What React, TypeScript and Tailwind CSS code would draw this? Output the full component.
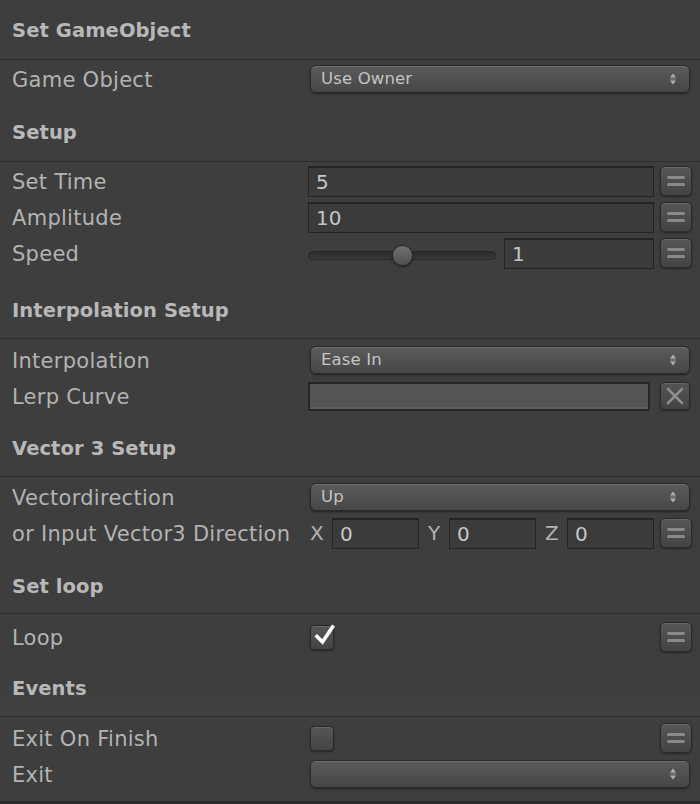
import React from "react";

const labelCls = "w-[308px] shrink-0 pl-[12px] pt-[1px] text-[21px] leading-[24px] tracking-[0.28px] text-[#b3b3b3] whitespace-nowrap";

function Header({ title, cls }: { title: string; cls: string }) {
  return (
    <div className={cls}>
      <div className="pl-[12px] text-[19.5px] font-bold leading-[24px] tracking-[0.1px] text-[#b8b8b8]">{title}</div>
    </div>
  );
}

function Sep() {
  return <div className="h-px bg-[#2e2e2e]" />;
}

function Row({ label, children }: { label: string; children?: React.ReactNode }) {
  return (
    <div className="flex h-[36px] items-center">
      <div className={labelCls}>{label}</div>
      <div className="flex flex-1 items-center pr-[8px]">{children}</div>
    </div>
  );
}

function Arrows() {
  return (
    <svg width="8" height="14" viewBox="0 0 8 14" className="shrink-0">
      <path d="M1 5.5 L4 1.5 L7 5.5 Z" fill="#b0b0b0" />
      <rect x="1" y="6.5" width="6" height="1" fill="#8a8a8a" />
      <path d="M1 8.5 L4 12.5 L7 8.5 Z" fill="#b0b0b0" />
    </svg>
  );
}

function Dropdown({ value }: { value: string }) {
  return (
    <div className="ml-[2px] flex h-[28px] w-[380px] items-center justify-between rounded-[6px] border border-[#2a2a2a] bg-gradient-to-b from-[#5b5b5b] to-[#474747] pl-[10px] pr-[12px] text-[16.5px] leading-[20px] tracking-[0.15px] text-[#c4c4c4] shadow-[inset_0_1px_0_rgba(255,255,255,0.12),0_1px_2px_rgba(0,0,0,0.45)]">
      <span>{value}</span>
      <Arrows />
    </div>
  );
}

function Field({ value, cls }: { value: string; cls: string }) {
  return (
    <div className={`flex h-[31px] items-center border border-t-2 border-[#242424] bg-[#3b3b3b] pl-[7px] text-[20px] leading-[24px] text-[#c6c6c6] ${cls}`}>
      {value}
    </div>
  );
}

function EqButton() {
  return (
    <div className="ml-[6px] flex h-[30px] w-[32px] shrink-0 flex-col items-center justify-center gap-[4px] rounded-[5px] border border-[#2a2a2a] bg-gradient-to-b from-[#575757] to-[#434343] shadow-[inset_0_1px_0_rgba(255,255,255,0.1),0_1px_2px_rgba(0,0,0,0.4)]">
      <div className="h-[3px] w-[18px] rounded-full bg-[#8a8a8a]" />
      <div className="h-[3px] w-[18px] rounded-full bg-[#8a8a8a]" />
    </div>
  );
}

function XButton() {
  return (
    <div className="ml-[10px] flex h-[28px] w-[30px] shrink-0 items-center justify-center rounded-[4px] border border-[#2a2a2a] bg-gradient-to-b from-[#555555] to-[#434343] shadow-[inset_0_1px_0_rgba(255,255,255,0.1),0_1px_2px_rgba(0,0,0,0.4)]">
      <svg width="18" height="18" viewBox="0 0 18 18">
        <path d="M2 2 L16 16 M16 2 L2 16" stroke="#8c8c8c" strokeWidth="2.6" strokeLinecap="round" />
      </svg>
    </div>
  );
}

function Checkbox({ checked }: { checked?: boolean }) {
  return (
    <div className="relative ml-[2px] h-[25px] w-[24px] shrink-0 rounded-[4px] border border-[#2a2a2a] bg-gradient-to-b from-[#565656] to-[#444444] shadow-[inset_0_1px_0_rgba(255,255,255,0.1),0_1px_2px_rgba(0,0,0,0.4)]">
      {checked && (
        <svg width="24" height="24" viewBox="0 0 24 24" className="absolute left-[3px] top-[-2px]">
          <path d="M3 12.5 L8.5 18 L18.5 3" stroke="#ffffff" strokeWidth="3.6" fill="none" strokeLinecap="square" />
        </svg>
      )}
    </div>
  );
}

export default function App() {
  return (
    <div className="flex h-[804px] w-[700px] flex-col overflow-hidden bg-[#3e3e3e] font-['DejaVu_Sans',sans-serif]">
      <Header title="Set GameObject" cls="h-[59px] pt-[19px]" />
      <Sep />
      <div className="pt-[1px]">
        <Row label="Game Object">
          <Dropdown value="Use Owner" />
        </Row>
      </div>

      <Header title="Setup" cls="h-[64px] pt-[24px]" />
      <Sep />
      <div className="pt-[1px]">
        <Row label="Set Time">
          <Field value="5" cls="w-[346px]" />
          <EqButton />
        </Row>
        <Row label="Amplitude">
          <Field value="10" cls="w-[346px]" />
          <EqButton />
        </Row>
        <Row label="Speed">
          <div className="flex w-[346px] items-center">
            <div className="relative mt-[4px] h-[9px] w-[188px] rounded-full border border-[#262626] bg-gradient-to-b from-[#2c2c2c] to-[#3a3a3a]">
              <div className="absolute left-[83px] top-[-7px] h-[21px] w-[21px] rounded-full border border-[#2a2a2a] bg-gradient-to-b from-[#727272] to-[#505050] shadow-[0_1px_2px_rgba(0,0,0,0.5)]" />
            </div>
            <Field value="1" cls="ml-auto w-[150px]" />
          </div>
          <EqButton />
        </Row>
      </div>

      <Header title="Interpolation Setup" cls="h-[67px] pt-[28px]" />
      <Sep />
      <div className="pt-[3px]">
        <Row label="Interpolation">
          <Dropdown value="Ease In" />
        </Row>
        <Row label="Lerp Curve">
          <div className="h-[29px] w-[342px] border-2 border-[#262626] bg-[#545454] shadow-[inset_0_-2px_0_#5e5e5e]" />
          <XButton />
        </Row>
      </div>

      <Header title="Vector 3 Setup" cls="h-[62px] pt-[23px]" />
      <Sep />
      <div className="pt-[2px]">
        <Row label="Vectordirection">
          <Dropdown value="Up" />
        </Row>
        <Row label="or Input Vector3 Direction">
          <span className="ml-[2px] w-[22px] text-[20px] leading-[24px] text-[#b3b3b3]">X</span>
          <Field value="0" cls="w-[87px]" />
          <span className="ml-[9px] w-[21px] text-[20px] leading-[24px] text-[#b3b3b3]">Y</span>
          <Field value="0" cls="w-[87px]" />
          <span className="ml-[9px] w-[22px] text-[20px] leading-[24px] text-[#b3b3b3]">Z</span>
          <Field value="0" cls="w-[87px]" />
          <EqButton />
        </Row>
      </div>

      <Header title="Set loop" cls="h-[62px] pt-[24px]" />
      <Sep />
      <div className="pt-[5px]">
        <Row label="Loop">
          <Checkbox checked />
          <div className="flex-1" />
          <EqButton />
        </Row>
      </div>

      <Header title="Events" cls="h-[61px] pt-[22px] bg-[linear-gradient(to_bottom,#3e3e3e_40px,#414141_40px)]" />
      <Sep />
      <div className="pt-[3px]">
        <Row label="Exit On Finish">
          <Checkbox />
          <div className="flex-1" />
          <EqButton />
        </Row>
        <Row label="Exit">
          <Dropdown value="" />
        </Row>
      </div>
      <div className="flex-1" />
      <div className="h-[3px] bg-[#2b2b2b]" />
    </div>
  );
}
